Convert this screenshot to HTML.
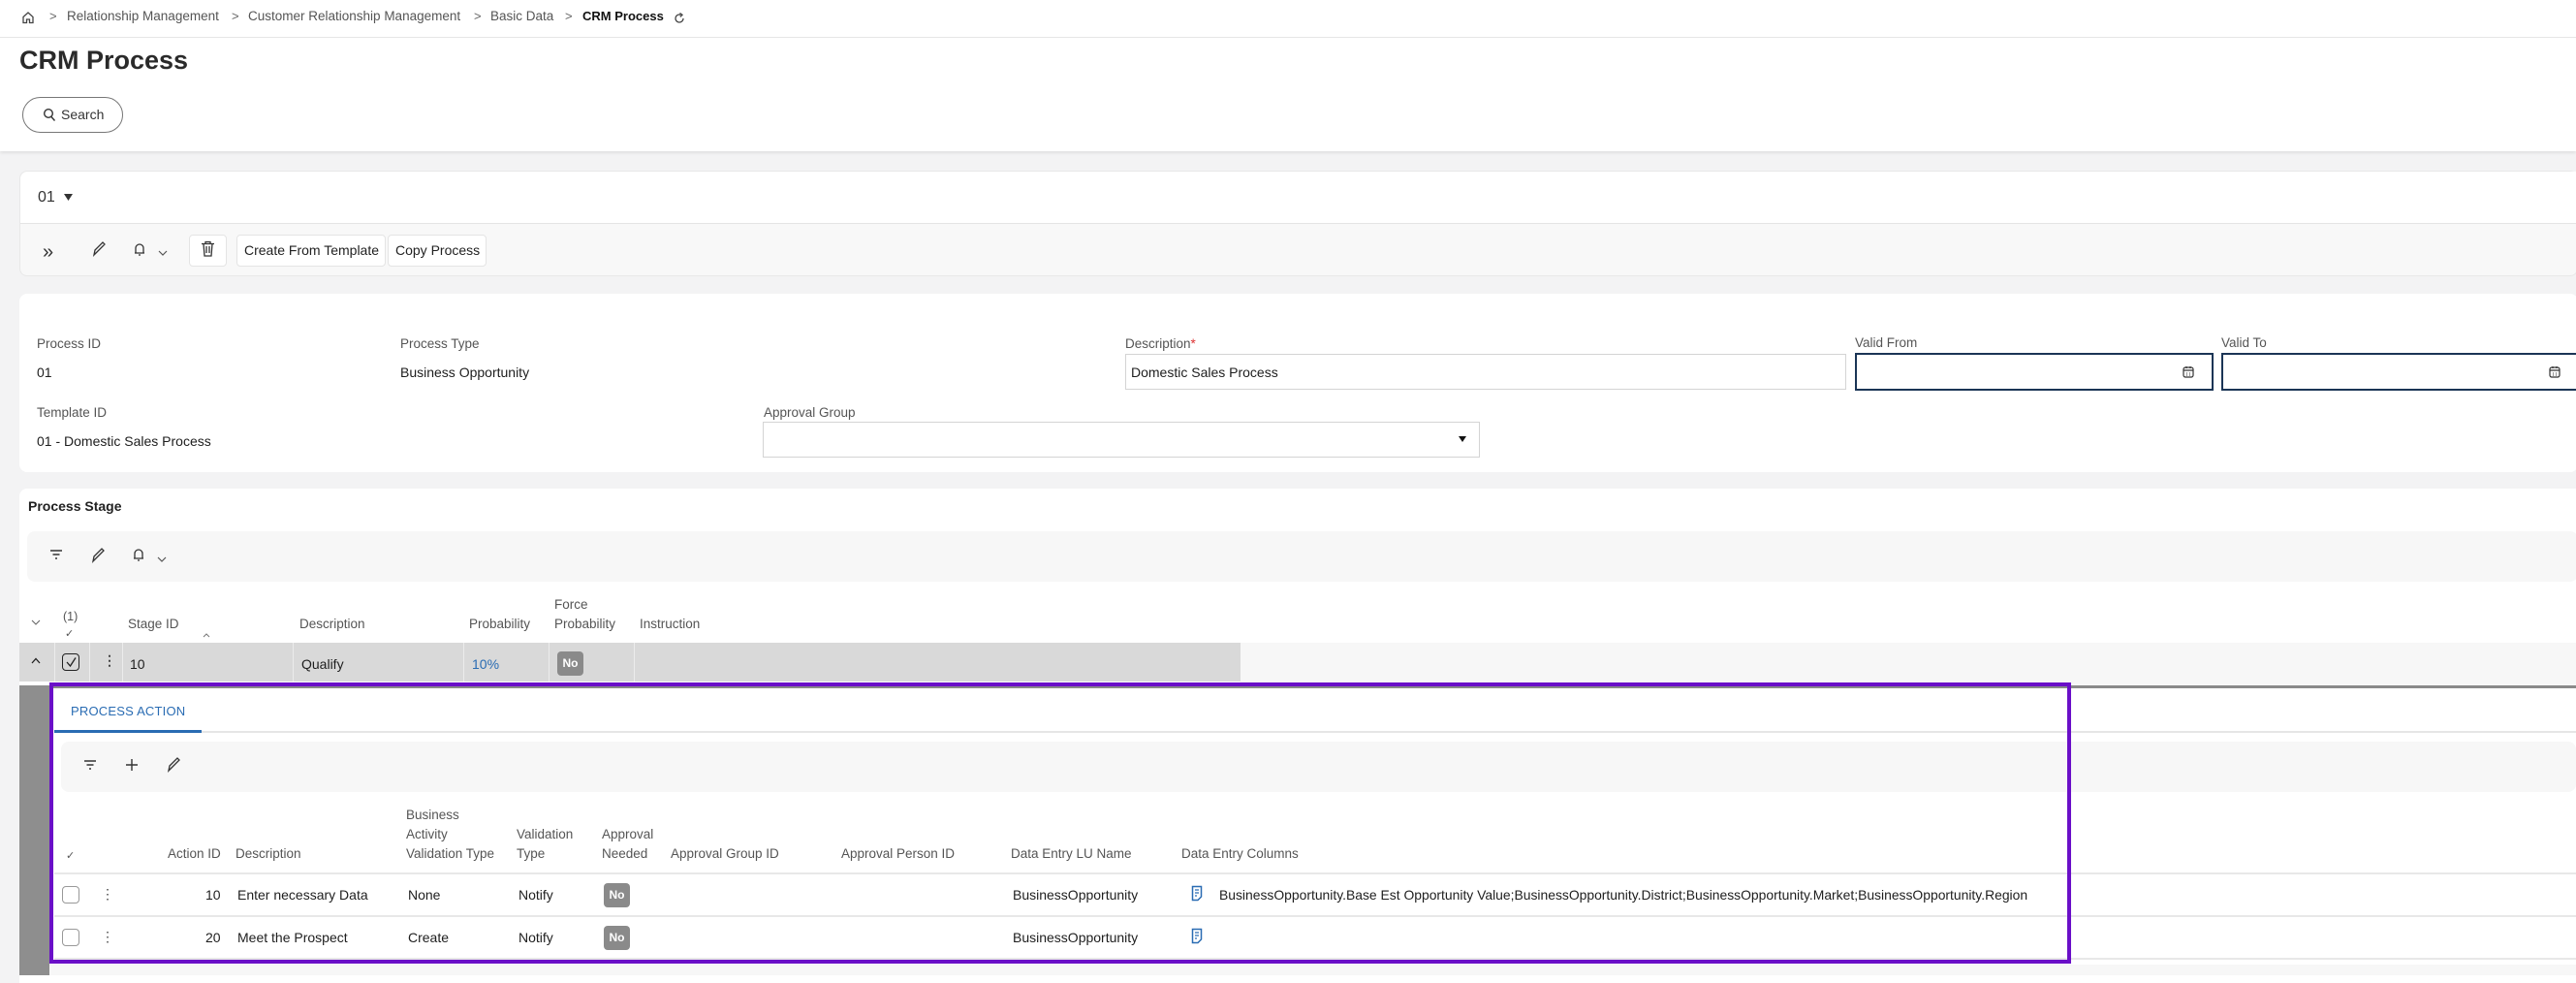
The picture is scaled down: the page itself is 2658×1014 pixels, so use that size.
<!DOCTYPE html>
<html><head><meta charset="utf-8"><style>
*{box-sizing:border-box;margin:0;padding:0}
body{width:2658px;height:1006px;overflow:hidden;background:#f3f3f4;font-family:"Liberation Sans",sans-serif;color:#222;position:relative}
.a{position:absolute;white-space:nowrap}
.lbl{font-size:13.5px;color:#555}
.val{font-size:14px;color:#1e1e1e}
.bc{font-size:13.5px;color:#555;top:9px}
.sep{font-size:13px;color:#666;top:9px}
.no{position:absolute;background:#8a8a8a;color:#fff;font-size:12px;font-weight:bold;border-radius:4px;width:27px;height:25px;text-align:center;line-height:25px}
.cb{position:absolute;width:18px;height:18px;border:1.5px solid #999;border-radius:4px;background:#fff}
.dots{position:absolute;font-size:14px;color:#444;font-weight:bold}
svg{position:absolute}
</style></head><body>
<!-- header -->
<div class="a" style="left:0;top:0;width:2658px;height:156px;background:#fff;box-shadow:0 2px 3px rgba(0,0,0,.08)"></div>
<div class="a" style="left:0;top:38px;width:2658px;height:1px;background:#e6e6e6"></div>
<svg style="left:22px;top:11px" width="14" height="14" viewBox="0 0 14 14"><path d="M2 6.5 L7 2 L12 6.5 V12.5 H8.5 V9 H5.5 V12.5 H2 Z" fill="none" stroke="#444" stroke-width="1.3"/></svg>
<span class="a sep" style="left:51px">&gt;</span>
<span class="a bc" style="left:69px">Relationship Management</span>
<span class="a sep" style="left:239px">&gt;</span>
<span class="a bc" style="left:256px">Customer Relationship Management</span>
<span class="a sep" style="left:489px">&gt;</span>
<span class="a bc" style="left:506px">Basic Data</span>
<span class="a sep" style="left:583px">&gt;</span>
<span class="a bc" style="left:601px;color:#111;font-weight:bold;font-size:13px">CRM Process</span>
<svg style="left:694px;top:12px" width="14" height="14" viewBox="0 0 14 14"><path d="M11 7 A4 4 0 1 1 8.5 3.3" fill="none" stroke="#444" stroke-width="1.3"/><path d="M7.5 1.5 L10 3.3 L7.8 5.4" fill="none" stroke="#444" stroke-width="1.3"/></svg>
<span class="a" style="left:20px;top:47px;font-size:27px;font-weight:bold;color:#2a2a2a">CRM Process</span>
<div class="a" style="left:23px;top:100px;width:104px;height:37px;border:1px solid #777;border-radius:19px;background:#fff"></div>
<svg style="left:44px;top:111px" width="14" height="15" viewBox="0 0 14 15"><circle cx="6" cy="6" r="4.3" fill="none" stroke="#333" stroke-width="1.4"/><path d="M9 9.5 L12.5 13.5" stroke="#333" stroke-width="1.4"/></svg>
<span class="a" style="left:63px;top:110px;font-size:14px;color:#333">Search</span>

<!-- 01 card -->
<div class="a" style="left:20px;top:176px;width:2640px;height:109px;background:#f8f8f8;border:1px solid #e8e8e8;border-radius:8px"></div>
<div class="a" style="left:21px;top:177px;width:2640px;height:54px;background:#fff;border-bottom:1px solid #e4e4e4;border-radius:8px 0 0 0"></div>
<span class="a" style="left:39px;top:195px;font-size:16px;color:#333">01</span>
<svg style="left:66px;top:200px" width="9" height="8"><path d="M0 0 H9 L4.5 7 Z" fill="#333"/></svg>
<span class="a" style="left:44px;top:249px;font-size:20px;color:#333">»</span>
<svg style="left:94px;top:248px" width="16" height="18" viewBox="0 0 16 18"><path d="M3 15 L4 10 L12 2 L14 4 L6 12 Z M3 15 L6 12" fill="none" stroke="#333" stroke-width="1.3"/></svg>
<svg style="left:137px;top:250px" width="14" height="16" viewBox="0 0 14 16"><path d="M3 11 V6 A4 4 0 0 1 11 6 V11 Z M2 11 H12 M6 13 H8" fill="none" stroke="#333" stroke-width="1.3"/></svg>
<svg style="left:163px;top:258px" width="10" height="6"><path d="M1 1 L5 5 L9 1" fill="none" stroke="#555" stroke-width="1.2"/></svg>
<div class="a" style="left:195px;top:242px;width:39px;height:33px;background:#fff;border:1px solid #e4e4e4;border-radius:4px"></div>
<svg style="left:207px;top:248px" width="15" height="18" viewBox="0 0 15 18"><path d="M1 3.5 H14 M5 3.5 V1.5 H10 V3.5 M3 3.5 L4 16 H11 L12 3.5 M6 6 V13 M9 6 V13" fill="none" stroke="#333" stroke-width="1.3"/></svg>
<div class="a" style="left:244px;top:242px;width:154px;height:33px;background:#fff;border:1px solid #e4e4e4;border-radius:4px"></div>
<span class="a" style="left:252px;top:250px;font-size:14px;color:#222">Create From Template</span>
<div class="a" style="left:400px;top:242px;width:102px;height:33px;background:#fff;border:1px solid #e4e4e4;border-radius:4px"></div>
<span class="a" style="left:408px;top:250px;font-size:14px;color:#222">Copy Process</span>

<!-- form card -->
<div class="a" style="left:20px;top:303px;width:2640px;height:184px;background:#fff;border-radius:8px"></div>
<span class="a lbl" style="left:38px;top:347px">Process ID</span>
<span class="a val" style="left:38px;top:376px">01</span>
<span class="a lbl" style="left:413px;top:347px">Process Type</span>
<span class="a val" style="left:413px;top:376px">Business Opportunity</span>
<span class="a lbl" style="left:38px;top:418px">Template ID</span>
<span class="a val" style="left:38px;top:447px">01 - Domestic Sales Process</span>
<span class="a lbl" style="left:788px;top:418px">Approval Group</span>
<div class="a" style="left:787px;top:435px;width:740px;height:37px;border:1px solid #d4d4d4;background:#fff"></div>
<svg style="left:1505px;top:450px" width="8" height="7"><path d="M0 0 H8 L4 6 Z" fill="#111"/></svg>
<span class="a lbl" style="left:1161px;top:347px">Description<span style="color:#d33">*</span></span>
<div class="a" style="left:1161px;top:365px;width:744px;height:37px;border:1px solid #d4d4d4;background:#fff"></div>
<span class="a val" style="left:1167px;top:376px">Domestic Sales Process</span>
<span class="a lbl" style="left:1914px;top:346px">Valid From</span>
<div class="a" style="left:1914px;top:364px;width:370px;height:39px;border:2px solid #1b3556;background:#fff"></div>
<span class="a lbl" style="left:2292px;top:346px">Valid To</span>
<div class="a" style="left:2292px;top:364px;width:368px;height:39px;border:2px solid #1b3556;background:#fff"></div>
<svg style="left:2252px;top:377px" width="12" height="13" viewBox="0 0 12 13"><rect x="1" y="2" width="10" height="10" rx="2" fill="none" stroke="#333" stroke-width="1.2"/><path d="M1 5 H11 M4 1 V3 M8 1 V3" stroke="#333" stroke-width="1.2"/><path d="M4 8h1M7 8h1M4 10h1M7 10h1" stroke="#333"/></svg>
<svg style="left:2630px;top:377px" width="12" height="13" viewBox="0 0 12 13"><rect x="1" y="2" width="10" height="10" rx="2" fill="none" stroke="#333" stroke-width="1.2"/><path d="M1 5 H11 M4 1 V3 M8 1 V3" stroke="#333" stroke-width="1.2"/><path d="M4 8h1M7 8h1M4 10h1M7 10h1" stroke="#333"/></svg>

<!-- process stage -->
<div class="a" style="left:20px;top:504px;width:2640px;height:510px;background:#fff;border-radius:8px 0 0 0"></div>
<span class="a" style="left:29px;top:514px;font-size:14px;font-weight:bold;color:#222">Process Stage</span>
<div class="a" style="left:28px;top:548px;width:2632px;height:52px;background:#f7f7f7;border-radius:8px"></div>
<svg style="left:51px;top:566px" width="14" height="13"><path d="M1 2 H13 M3.5 6 H10.5 M6 10 H8" stroke="#333" stroke-width="1.4"/></svg>
<svg style="left:93px;top:564px" width="16" height="18" viewBox="0 0 16 18"><path d="M3 15 L4 10 L12 2 L14 4 L6 12 Z M3 15 L6 12" fill="none" stroke="#333" stroke-width="1.3"/></svg>
<svg style="left:136px;top:565px" width="14" height="16" viewBox="0 0 14 16"><path d="M3 11 V6 A4 4 0 0 1 11 6 V11 Z M2 11 H12 M6 13 H8" fill="none" stroke="#333" stroke-width="1.3"/></svg>
<svg style="left:162px;top:574px" width="10" height="6"><path d="M1 1 L5 5 L9 1" fill="none" stroke="#555" stroke-width="1.2"/></svg>
<svg style="left:32px;top:639px" width="10" height="6"><path d="M1 1 L5 5 L9 1" fill="none" stroke="#666" stroke-width="1.1"/></svg>
<span class="a lbl" style="left:65px;top:629px;font-size:12.5px">(1)</span>
<span class="a lbl" style="left:67px;top:647px;font-size:11px">✓</span>
<span class="a lbl" style="left:132px;top:636px">Stage ID</span>
<svg style="left:209px;top:653px" width="8" height="5"><path d="M1 4 L4 1 L7 4" fill="none" stroke="#777"/></svg>
<span class="a lbl" style="left:309px;top:636px">Description</span>
<span class="a lbl" style="left:484px;top:636px">Probability</span>
<span class="a lbl" style="left:572px;top:616px">Force</span>
<span class="a lbl" style="left:572px;top:636px">Probability</span>
<span class="a lbl" style="left:660px;top:636px">Instruction</span>
<div class="a" style="left:20px;top:663px;width:1260px;height:40px;background:#d9d9d9"></div>
<div class="a" style="left:1280px;top:663px;width:1380px;height:44px;background:#f7f7f7"></div>
<div class="a" style="left:56px;top:663px;width:1px;height:40px;background:#ececec"></div>
<div class="a" style="left:92px;top:663px;width:1px;height:40px;background:#ececec"></div>
<div class="a" style="left:126px;top:663px;width:1px;height:40px;background:#ececec"></div>
<div class="a" style="left:302px;top:663px;width:1px;height:40px;background:#ececec"></div>
<div class="a" style="left:478px;top:663px;width:1px;height:40px;background:#ececec"></div>
<div class="a" style="left:566px;top:663px;width:1px;height:40px;background:#ececec"></div>
<div class="a" style="left:654px;top:663px;width:1px;height:40px;background:#ececec"></div>
<svg style="left:32px;top:678px" width="10" height="7"><path d="M1 6 L5 1.5 L9 6" fill="none" stroke="#222" stroke-width="1.3"/></svg>
<div class="cb" style="left:64px;top:674px;border-color:#222;background:transparent"></div>
<svg style="left:67px;top:677px" width="13" height="12"><path d="M2 6 L5.5 10 L11 1.5" fill="none" stroke="#222" stroke-width="1.3"/></svg>
<span class="dots" style="left:106px;top:673px">⋮</span>
<span class="a val" style="left:134px;top:677px">10</span>
<span class="a val" style="left:311px;top:677px">Qualify</span>
<span class="a val" style="left:487px;top:677px;color:#2a6cb3">10%</span>
<div class="no" style="left:575px;top:672px">No</div>

<!-- expanded -->
<div class="a" style="left:20px;top:707px;width:31px;height:299px;background:#8e8e8e"></div>
<div class="a" style="left:51px;top:707px;width:2607px;height:3px;background:#8a8a8a"></div>
<div class="a" style="left:51px;top:710px;width:2607px;height:285px;background:#fff"></div>
<div class="a" style="left:51px;top:995px;width:2607px;height:11px;background:#f7f7f7"></div>
<span class="a" style="left:73px;top:726px;font-size:13px;color:#2a6cb3;letter-spacing:0.2px">PROCESS ACTION</span>
<div class="a" style="left:56px;top:754px;width:2602px;height:2px;background:#e6e6e6"></div>
<div class="a" style="left:56px;top:753px;width:152px;height:3px;background:#2a6cb3"></div>
<div class="a" style="left:63px;top:765px;width:2595px;height:52px;background:#f7f7f7;border-radius:8px"></div>
<svg style="left:86px;top:783px" width="14" height="13"><path d="M1 2 H13 M3.5 6 H10.5 M6 10 H8" stroke="#333" stroke-width="1.4"/></svg>
<svg style="left:129px;top:782px" width="14" height="14"><path d="M7 1 V13 M1 7 H13" stroke="#333" stroke-width="1.4"/></svg>
<svg style="left:171px;top:780px" width="16" height="18" viewBox="0 0 16 18"><path d="M3 15 L4 10 L12 2 L14 4 L6 12 Z M3 15 L6 12" fill="none" stroke="#333" stroke-width="1.3"/></svg>
<span class="a lbl" style="left:68px;top:876px;font-size:11px">✓</span>
<span class="a lbl" style="left:173px;top:873px">Action ID</span>
<span class="a lbl" style="left:243px;top:873px">Description</span>
<span class="a lbl" style="left:419px;top:833px">Business</span>
<span class="a lbl" style="left:419px;top:853px">Activity</span>
<span class="a lbl" style="left:419px;top:873px">Validation Type</span>
<span class="a lbl" style="left:533px;top:853px">Validation</span>
<span class="a lbl" style="left:533px;top:873px">Type</span>
<span class="a lbl" style="left:621px;top:853px">Approval</span>
<span class="a lbl" style="left:621px;top:873px">Needed</span>
<span class="a lbl" style="left:692px;top:873px">Approval Group ID</span>
<span class="a lbl" style="left:868px;top:873px">Approval Person ID</span>
<span class="a lbl" style="left:1043px;top:873px">Data Entry LU Name</span>
<span class="a lbl" style="left:1219px;top:873px">Data Entry Columns</span>
<div class="a" style="left:56px;top:900px;width:2602px;height:2px;background:#e8e8e8"></div>
<div class="a" style="left:56px;top:944px;width:2602px;height:2px;background:#e8e8e8"></div>
<div class="a" style="left:56px;top:988px;width:2602px;height:2px;background:#e8e8e8"></div>
<!-- row 1 -->
<div class="cb" style="left:64px;top:914px"></div>
<span class="dots" style="left:104px;top:914px;font-weight:normal">⋮</span>
<span class="a val" style="left:212px;top:915px">10</span>
<span class="a val" style="left:245px;top:915px">Enter necessary Data</span>
<span class="a val" style="left:421px;top:915px">None</span>
<span class="a val" style="left:535px;top:915px">Notify</span>
<div class="no" style="left:623px;top:911px">No</div>
<span class="a val" style="left:1045px;top:915px">BusinessOpportunity</span>
<svg style="left:1229px;top:913px" width="12" height="17" viewBox="0 0 12 17"><path d="M1.5 1.5 H10.5 V12 L7 15.5 H1.5 Z" fill="none" stroke="#2a6cb3" stroke-width="1.5"/><path d="M4 5 H8 M4 8 H8 M4 11 H6" stroke="#2a6cb3" stroke-width="1.2"/></svg>
<span class="a val" style="left:1258px;top:915px;font-size:13.9px">BusinessOpportunity.Base Est Opportunity Value;BusinessOpportunity.District;BusinessOpportunity.Market;BusinessOpportunity.Region</span>
<!-- row 2 -->
<div class="cb" style="left:64px;top:958px"></div>
<span class="dots" style="left:104px;top:958px;font-weight:normal">⋮</span>
<span class="a val" style="left:212px;top:959px">20</span>
<span class="a val" style="left:245px;top:959px">Meet the Prospect</span>
<span class="a val" style="left:421px;top:959px">Create</span>
<span class="a val" style="left:535px;top:959px">Notify</span>
<div class="no" style="left:623px;top:955px">No</div>
<span class="a val" style="left:1045px;top:959px">BusinessOpportunity</span>
<svg style="left:1229px;top:957px" width="12" height="17" viewBox="0 0 12 17"><path d="M1.5 1.5 H10.5 V12 L7 15.5 H1.5 Z" fill="none" stroke="#2a6cb3" stroke-width="1.5"/><path d="M4 5 H8 M4 8 H8 M4 11 H6" stroke="#2a6cb3" stroke-width="1.2"/></svg>
<!-- purple highlight -->
<div class="a" style="left:51px;top:704px;width:2086px;height:290px;border:4px solid #6a0fc8"></div>
</body></html>
